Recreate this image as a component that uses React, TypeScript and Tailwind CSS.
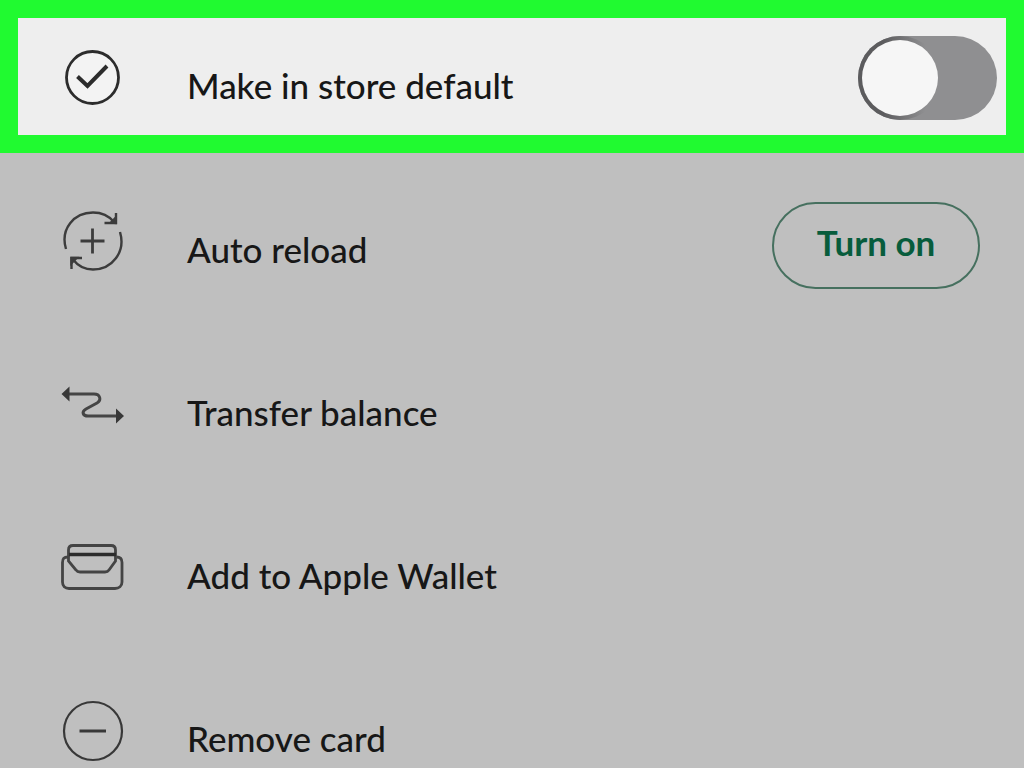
import type { ReactNode } from "react";

function CheckIcon() {
  return (
    <svg viewBox="0 0 64 64" className="size-16 shrink-0" fill="none" stroke="#2c2c2c" aria-hidden="true">
      <circle cx="31.5" cy="31.5" r="26" fill="#f3f3f3" strokeWidth="2.8" />
      <path d="M16.5 30.500 26.500 40 46 20" strokeWidth="4" />
    </svg>
  );
}

function ReloadIcon() {
  return (
    <svg viewBox="0 0 64 64" className="size-16 shrink-0" fill="none" stroke="#3c3c3c" strokeWidth="2.4" aria-hidden="true">
      <path d="M5 39C-1 19 13 2.500 32 2.500c9 0 16 3.500 21 9.500" />
      <path d="M59 22c6 20-8 37.500-27 37.500-9 0-15-3.500-20-10" />
      <path d="M43.500 13h11.500V3" />
      <path d="M50 12.500 54.500 8v5z" fill="#3c3c3c" />
      <path d="M21 48H10.500v11" />
      <path d="M10.500 53v-5h5z" fill="#3c3c3c" />
      <path d="M31.500 18.500v25M19.500 31h24" strokeWidth="2.8" />
    </svg>
  );
}

function TransferIcon() {
  return (
    <svg viewBox="0 0 64 64" className="size-16 shrink-0" fill="none" stroke="#454545" strokeWidth="3" aria-hidden="true">
      <path d="M7 21H33C39 21 41 27 36 30L25 36C20 39 22 43 27 43H57" />
      <path d="M0.500 21 8.500 13.500v15zM63 43l-8-7.500v15z" fill="#383838" stroke="none" />
    </svg>
  );
}

function WalletIcon() {
  return (
    <svg viewBox="0 0 64 64" className="size-16 shrink-0" fill="none" stroke="#444" strokeWidth="2.8" aria-hidden="true">
      <path d="M7 21C3 21 1.500 22.500 1.500 26.500V46C1.500 50 4 52.500 8 52.500H54C58 52.500 61 50 61 46V26.500C61 22.500 59 21 55.500 21" />
      <path d="M7.500 25V14C7.500 11 9 9.500 12 9.500H50C53 9.500 54.500 11 54.500 14V25L48 34C47 35.500 46 36 44 36H19C17 36 16 35.500 15 34Z" />
      <path d="M8 18.500H55" stroke="#2c2c2c" strokeWidth="3.4" />
    </svg>
  );
}

function RemoveIcon() {
  return (
    <svg viewBox="0 0 64 64" className="size-16 shrink-0" fill="none" stroke="#383838" aria-hidden="true">
      <circle cx="32" cy="32" r="29" strokeWidth="2.2" />
      <path d="M18.500 32H45" strokeWidth="3" />
    </svg>
  );
}

function Row({ icon, label, children }: { icon: ReactNode; label: ReactNode; children?: ReactNode }) {
  return (
    <>
      {icon}
      <div className="flex-1 pt-[14px] pl-[62px] text-[35px] leading-10 font-medium whitespace-nowrap">{label}</div>
      {children}
    </>
  );
}

const actions = [
  { label: "Auto reload", icon: <ReloadIcon />, button: "Turn on" },
  { label: "Transfer balance", icon: <TransferIcon /> },
  { label: "Add to Apple Wallet", icon: <WalletIcon /> },
  { label: "Remove card", icon: <RemoveIcon /> },
];

export default function App() {
  return (
    <main className="h-screen overflow-hidden bg-[#bfbfbf] font-['Lato',sans-serif] text-[#171717]">
      <section className="flex h-[153px] items-center border-[18px] border-[#20fa30] bg-[#eeeeee] pt-[3px] pr-[9px] pl-[43px]">
        <Row icon={<CheckIcon />} label={<label htmlFor="store-default">Make in store default</label>}>
          <span className="relative flex h-[84px] w-[139px] shrink-0 items-center rounded-full bg-[#8f8f91]">
            <input
              id="store-default"
              type="checkbox"
              role="switch"
              className="peer absolute inset-0 size-full cursor-pointer appearance-none rounded-full"
            />
            <span className="pointer-events-none size-[84px] rounded-full bg-linear-to-r from-[#5c5c5e] from-30% to-[#8f8f91] to-80% p-1 peer-checked:ml-auto">
              <span className="block size-full rounded-full bg-[#f6f6f6]" />
            </span>
          </span>
        </Row>
      </section>
      <ul className="pt-[7px]">
        {actions.map((action) => (
          <li key={action.label} className="flex h-[163px] items-center pr-11 pl-[61px]">
            <Row icon={action.icon} label={action.label}>
              {action.button ? (
                <button
                  type="button"
                  className="mt-2 h-[87px] w-[208px] rounded-full border-2 border-[#46705f] pb-2 text-[35px] leading-10 font-bold text-[#075c3c]"
                >
                  {action.button}
                </button>
              ) : null}
            </Row>
          </li>
        ))}
      </ul>
    </main>
  );
}
